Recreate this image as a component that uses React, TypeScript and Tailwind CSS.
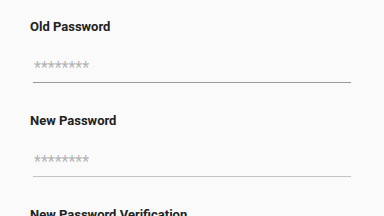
import { useState } from 'react';

// Campos del formulario de cambio de contraseña
const fields = [
  { id: 'old', label: 'Old Password', line: 'border-[#9a9a9a]' },
  { id: 'new', label: 'New Password', line: 'border-[#c4c4c4]' },
  { id: 'verify', label: 'New Password Verification', line: 'border-[#c4c4c4]' },
];

function PasswordField({ label, line }: { label: string; line: string }) {
  const [value, setValue] = useState('');
  return (
    <div className="pb-[30px]">
      <label className="block pl-[30px] text-[13px] leading-[15px] font-bold text-[#222222]">
        {label}
      </label>
      <div className="mt-[18px] ml-[33px] w-[318px]">
        <input
          type="password"
          value={value}
          onChange={e => setValue(e.target.value)}
          placeholder="********"
          className={`block h-[31px] w-full border-b bg-transparent pl-[1px] text-[16px] text-[#333333] outline-none placeholder:text-[#b4b4b4] ${line}`}
        />
      </div>
    </div>
  );
}

export default function App() {
  return (
    <div
      className="h-[216px] w-[384px] overflow-hidden bg-[#fafafa] pt-[19px]"
      style={{ fontFamily: 'Roboto, "Liberation Sans", sans-serif' }}
    >
      {fields.map(f => (
        <PasswordField key={f.id} label={f.label} line={f.line} />
      ))}
    </div>
  );
}
